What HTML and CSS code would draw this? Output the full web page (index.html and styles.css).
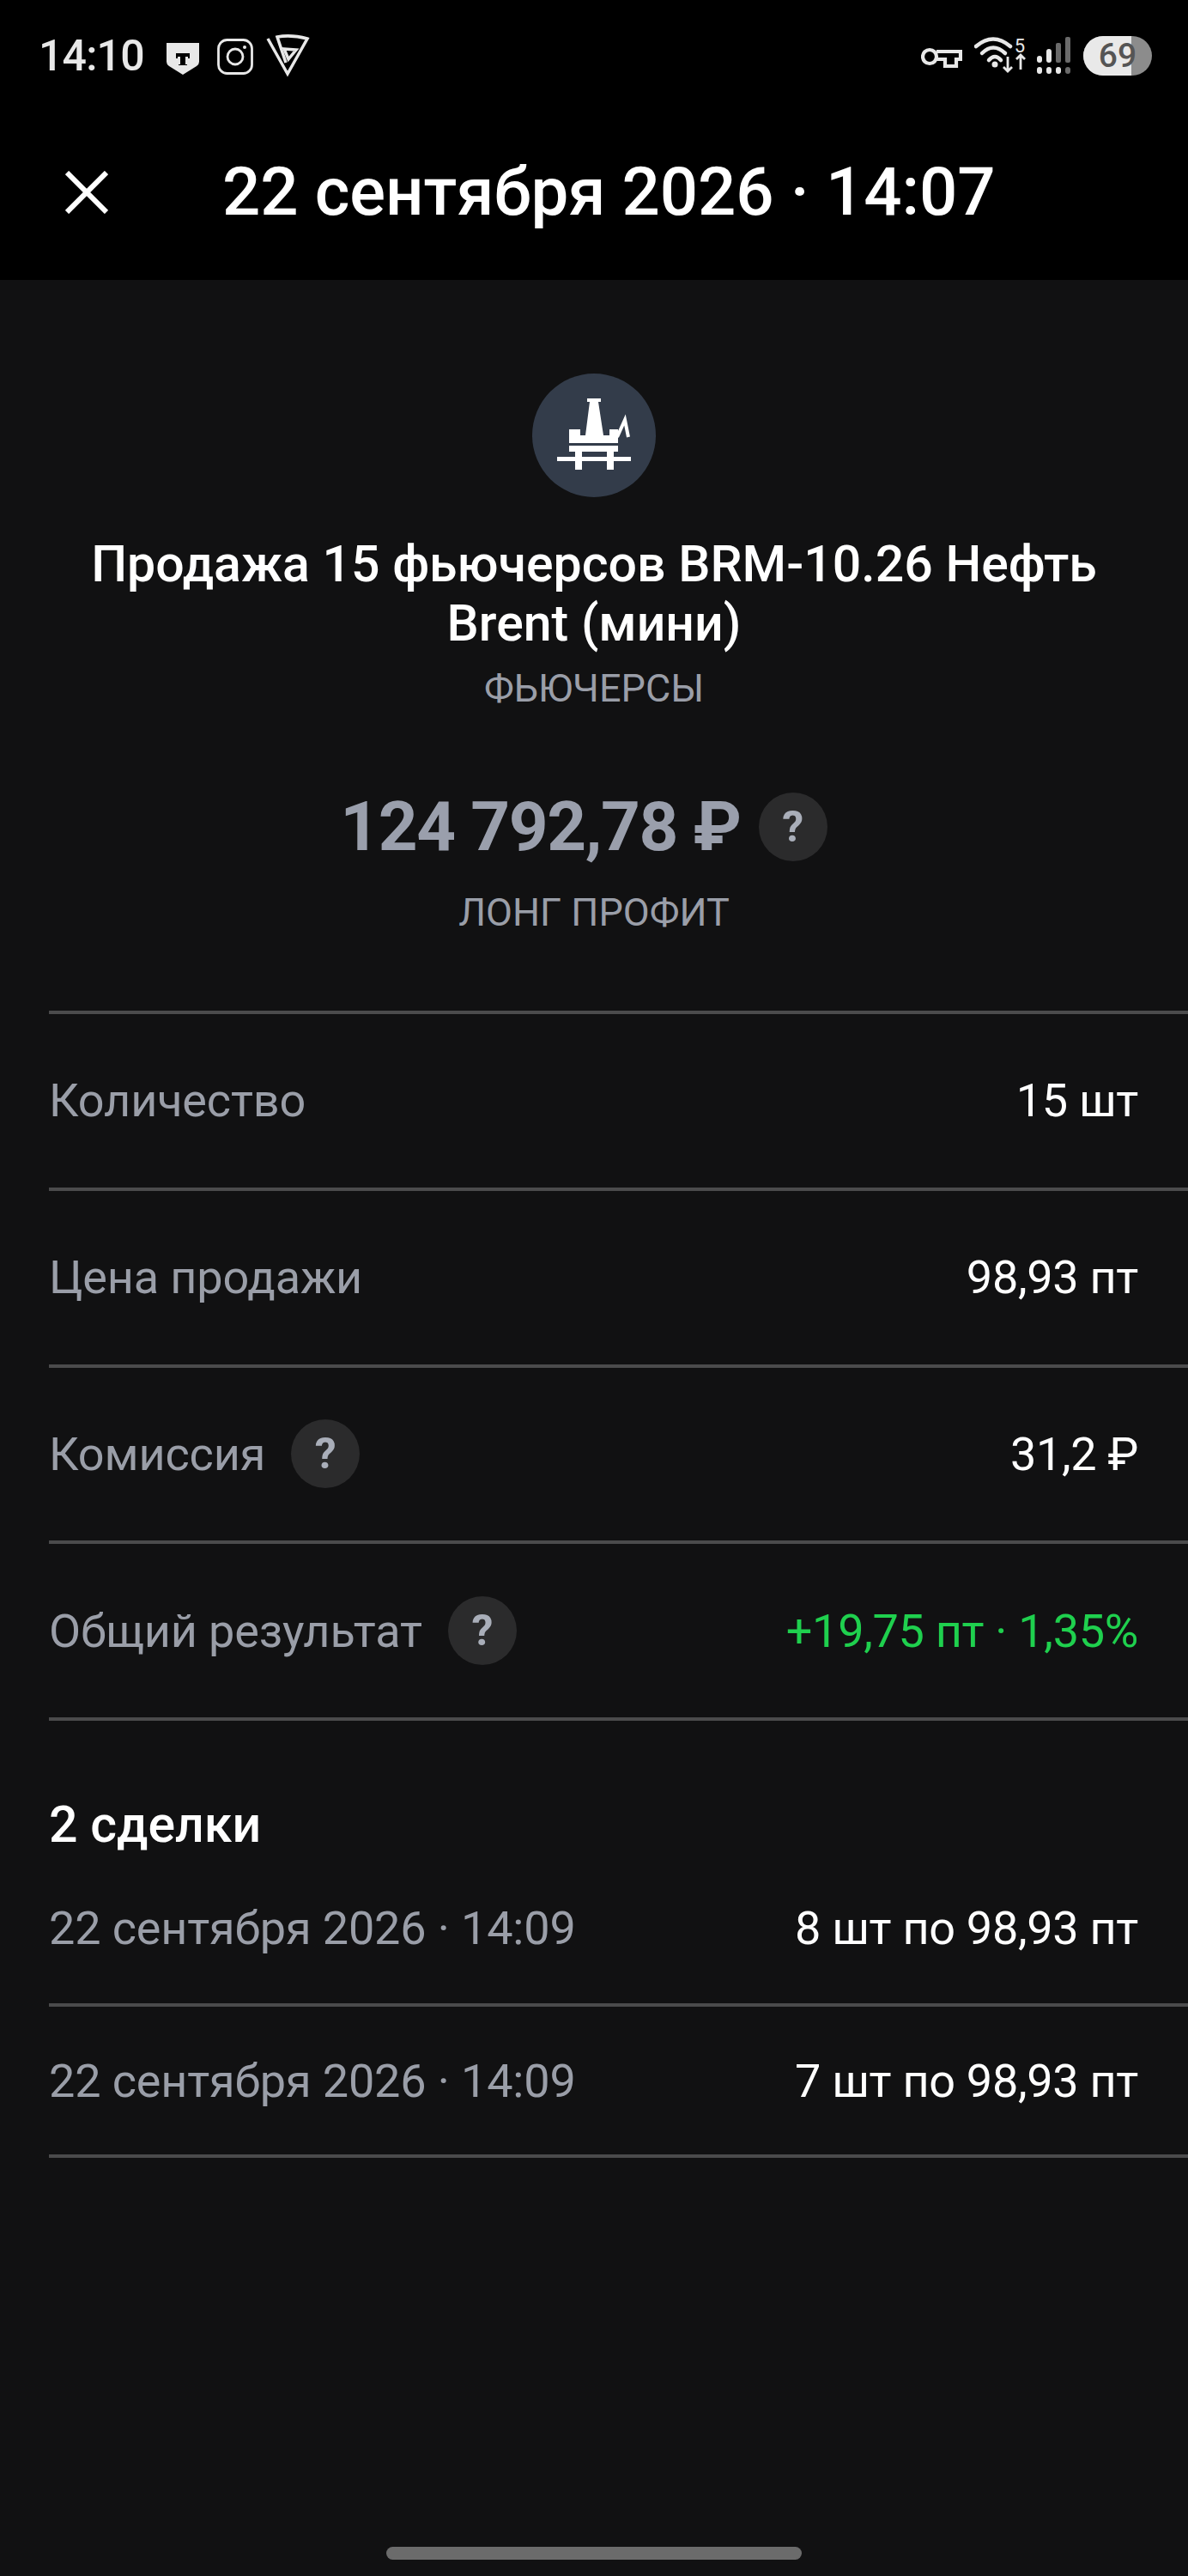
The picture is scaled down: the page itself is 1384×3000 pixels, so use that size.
FILE: index.html
```html
<!DOCTYPE html>
<html>
<head>
  <meta charset="UTF-8">
  <title>Операция</title>
  <link rel="stylesheet" href="styles.css">
</head>
<body>
  <div class="page">
    <div class="top">
      <div class="status">
        <div class="status-left">
          <span class="clock">14:10</span>
          <svg class="ic-tbank" viewBox="0 0 38 37"><path fill="#e8e8e8" fill-rule="evenodd" d="M0 0H38V22Q38 25 35 27L19 37 3 27Q0 25 0 22ZM11 12V18H13V16H16V25H14V26H24V25H22V16H25V18H27V12Z"/></svg>
          <svg class="ic-insta" viewBox="0 0 42 42" fill="none" stroke="#e8e8e8" stroke-width="2.800"><rect x="1.500" y="1.500" width="39" height="39" rx="10"/><circle cx="21" cy="21" r="9"/><circle cx="32" cy="10" r="2" fill="#e8e8e8" stroke="none"/></svg>
          <svg class="ic-shield" viewBox="0 0 52 50" fill="none" stroke="#e8e8e8" stroke-width="3.500"><path d="M3 5 26 46 49 5Q30 0 14 3L24 33"/><path d="M22 17 36 18 27 29Z"/></svg>
        </div>
        <div class="status-right">
          <svg class="ic-key" viewBox="0 0 48 25" fill="none" stroke="#e8e8e8" stroke-width="4.200"><circle cx="10" cy="11" r="8"/><path d="M18 5H46V14H41V22H28V14H18"/></svg>
          <svg class="ic-wifi" viewBox="0 0 60 46" fill="none" stroke="#e8e8e8" stroke-width="4.500" stroke-linecap="round"><path d="M2 13Q22 -4 42 13"/><path d="M9 21Q22 8 36 21"/><path d="M17 29Q24 21 31 29"/><circle cx="24" cy="34" r="3.500" fill="#e8e8e8" stroke="none"/><path stroke-width="2.800" stroke-linecap="butt" d="M39 25V42M34 37 39 42 44 37M54 40V23M49 28 54 23 59 28"/></svg>
          <span class="sim">5</span>
          <svg class="ic-signal" viewBox="0 0 40 44"><g fill="#e8e8e8"><rect x="0" y="22" width="6" height="8" rx="3"/><rect x="11" y="14" width="6" height="16" rx="3"/><rect x="0" y="35" width="6" height="8" rx="3"/><rect x="11" y="35" width="6" height="8" rx="3"/><rect x="22" y="35" width="6" height="8" rx="3"/></g><g fill="#6a6a6a"><rect x="22" y="7" width="6" height="23" rx="2"/><rect x="33" y="0" width="6" height="30" rx="2"/><rect x="33" y="35" width="6" height="8" rx="3"/></g></svg>
          <div class="battery"><span class="battery-level"></span><span class="battery-num">69</span></div>
        </div>
      </div>
      <div class="header">
        <svg class="ic-close" viewBox="0 0 50 50" fill="none" stroke="#fff" stroke-width="6"><path d="M2 2 48 48M48 2 2 48"/></svg>
        <h1 class="header-title">22 сентября 2026 · 14:07</h1>
      </div>
    </div>

    <div class="content">
      <div class="asset-icon">
        <svg viewBox="0 0 86 83" width="86" height="83" fill="#fff"><path d="M35 0H51V4H48L54 43H61V36H71V52H14V36H27V43H33L38 4H35Z"/><path d="M70 45 79 25 83 45" fill="none" stroke="#fff" stroke-width="4"/><rect x="14" y="55" width="57" height="7"/><rect x="0" y="68" width="86" height="5"/><rect x="21" y="60" width="8" height="23"/><rect x="58" y="60" width="8" height="23"/></svg>
      </div>
      <h2 class="op-title">Продажа 15 фьючерсов BRM-10.26 Нефть Brent (мини)</h2>
      <div class="op-type">ФЬЮЧЕРСЫ</div>
      <div class="amount-row">
        <span class="amount">124 792,78 ₽</span>
        <span class="help">?</span>
      </div>
      <div class="amount-label">ЛОНГ ПРОФИТ</div>

      <div class="details">
        <div class="row">
          <span class="row-label">Количество</span>
          <span class="row-value">15 шт</span>
        </div>
        <div class="row">
          <span class="row-label">Цена продажи</span>
          <span class="row-value">98,93 пт</span>
        </div>
        <div class="row">
          <span class="row-label">Комиссия <span class="help">?</span></span>
          <span class="row-value">31,2 ₽</span>
        </div>
        <div class="row">
          <span class="row-label">Общий результат <span class="help">?</span></span>
          <span class="row-value green">+19,75 пт · 1,35%</span>
        </div>
      </div>

      <h3 class="deals-title">2 сделки</h3>
      <div class="deals">
        <div class="row row-deal">
          <span class="row-label">22 сентября 2026 · 14:09</span>
          <span class="row-value">8 шт по 98,93 пт</span>
        </div>
        <div class="row row-deal">
          <span class="row-label">22 сентября 2026 · 14:09</span>
          <span class="row-value">7 шт по 98,93 пт</span>
        </div>
      </div>
    </div>

    <div class="home-bar"></div>
  </div>
</body>
</html>
```

FILE: styles.css
```css
* {
  box-sizing: border-box;
}
body {
  margin: 0;
  background: #111112;
  color: white;
  font-family: Roboto, "Liberation Sans", sans-serif;
}
.page {
  width: 1384px;
  height: 3000px;
  display: flex;
  flex-direction: column;
  overflow: hidden;
}

.top {
  background: #000;
  height: 326px;
}
.status {
  height: 130px;
  padding: 0 42px 0 45px;
  display: flex;
  justify-content: space-between;
  align-items: center;
}
.status-left,
.status-right {
  display: flex;
  align-items: center;
}
.clock {
  font-size: 50px;
  font-weight: 500;
  letter-spacing: -0.8px;
  color: #e8e8e8;
  margin-right: 26px;
}
.ic-tbank {
  width: 38px;
  height: 37px;
  margin-right: 21px;
  margin-top: 7px;
}
.ic-insta {
  width: 42px;
  height: 42px;
  margin-right: 14px;
  margin-top: 2px;
}
.ic-shield {
  width: 52px;
  height: 50px;
}
.ic-key {
  width: 48px;
  height: 25px;
  margin-right: 14px;
  margin-top: 5px;
}
.ic-wifi {
  width: 60px;
  height: 46px;
  margin-top: -2px;
}
.sim {
  font-size: 22px;
  color: #e8e8e8;
  margin: -24px 14px 0 -13px;
}
.ic-signal {
  width: 40px;
  height: 44px;
  margin-right: 14px;
}
.battery {
  position: relative;
  width: 80px;
  height: 46px;
  border-radius: 23px;
  background: #8c8c8c;
  overflow: hidden;
  display: flex;
  align-items: center;
  justify-content: center;
}
.battery-level {
  position: absolute;
  left: 0;
  top: 0;
  bottom: 0;
  width: 56px;
  background: #e9e9e9;
}
.battery-num {
  position: relative;
  font-size: 39px;
  font-weight: 500;
  color: #555;
}

.header {
  height: 196px;
  display: flex;
  align-items: center;
  padding: 0 0 9px 76px;
}
.ic-close {
  width: 50px;
  height: 50px;
  margin-right: 133px;
  flex-shrink: 0;
}
.header-title {
  margin: 0;
  font-size: 78px;
  font-weight: 500;
  letter-spacing: -0.1px;
  white-space: nowrap;
}

.content {
  flex: 1;
  display: flex;
  flex-direction: column;
  align-items: center;
  padding-top: 109px;
}
.asset-icon {
  width: 144px;
  height: 144px;
  border-radius: 50%;
  background: #333c4a;
  display: flex;
  align-items: center;
  justify-content: center;
  padding-bottom: 4px;
}
.op-title {
  margin: 43px 0 0;
  width: 1240px;
  text-align: center;
  font-size: 59px;
  line-height: 69px;
  font-weight: 500;
}
.op-type {
  margin-top: 16px;
  font-size: 45px;
  line-height: 52px;
  color: #9a9ea8;
}
.amount-row {
  margin-top: 93px;
  height: 84px;
  padding-right: 24px;
  display: flex;
  align-items: center;
  gap: 21px;
}
.amount {
  font-size: 80px;
  font-weight: 700;
  letter-spacing: -1.4px;
  color: #9a9fac;
  white-space: nowrap;
}
.help {
  display: inline-flex;
  align-items: center;
  justify-content: center;
  width: 80px;
  height: 80px;
  border-radius: 50%;
  background: #2b2b2c;
  color: #a9aeb9;
  font-size: 50px;
  font-weight: 700;
  flex-shrink: 0;
}
.amount-label {
  margin-top: 31px;
  font-size: 45px;
  line-height: 54px;
  color: #9a9ea8;
}

.details {
  align-self: stretch;
  margin-top: 87px;
  margin-left: 57px;
  border-top: 4px solid #4b4b4c;
}
.row {
  height: 205.750px;
  padding-right: 58px;
  border-bottom: 4px solid #4b4b4c;
  display: flex;
  justify-content: space-between;
  align-items: center;
  font-size: 54px;
}
.row-label {
  color: #9a9ea8;
  letter-spacing: -0.150px;
  display: flex;
  align-items: center;
  gap: 30px;
}
.row-value {
  letter-spacing: -0.300px;
  white-space: nowrap;
}
.green {
  color: #1fd04e;
}

.deals-title {
  align-self: flex-start;
  margin: 89px 0 0 57px;
  font-size: 59px;
  line-height: 63px;
  font-weight: 500;
}
.deals {
  align-self: stretch;
  margin-top: 5px;
  margin-left: 57px;
}
.row-deal {
  height: 176px;
}
.row-deal:first-child {
  padding-bottom: 4px;
}

.home-bar {
  width: 484px;
  height: 15px;
  border-radius: 8px;
  background: #6b6b6b;
  margin: 0 auto 19px;
}
```
